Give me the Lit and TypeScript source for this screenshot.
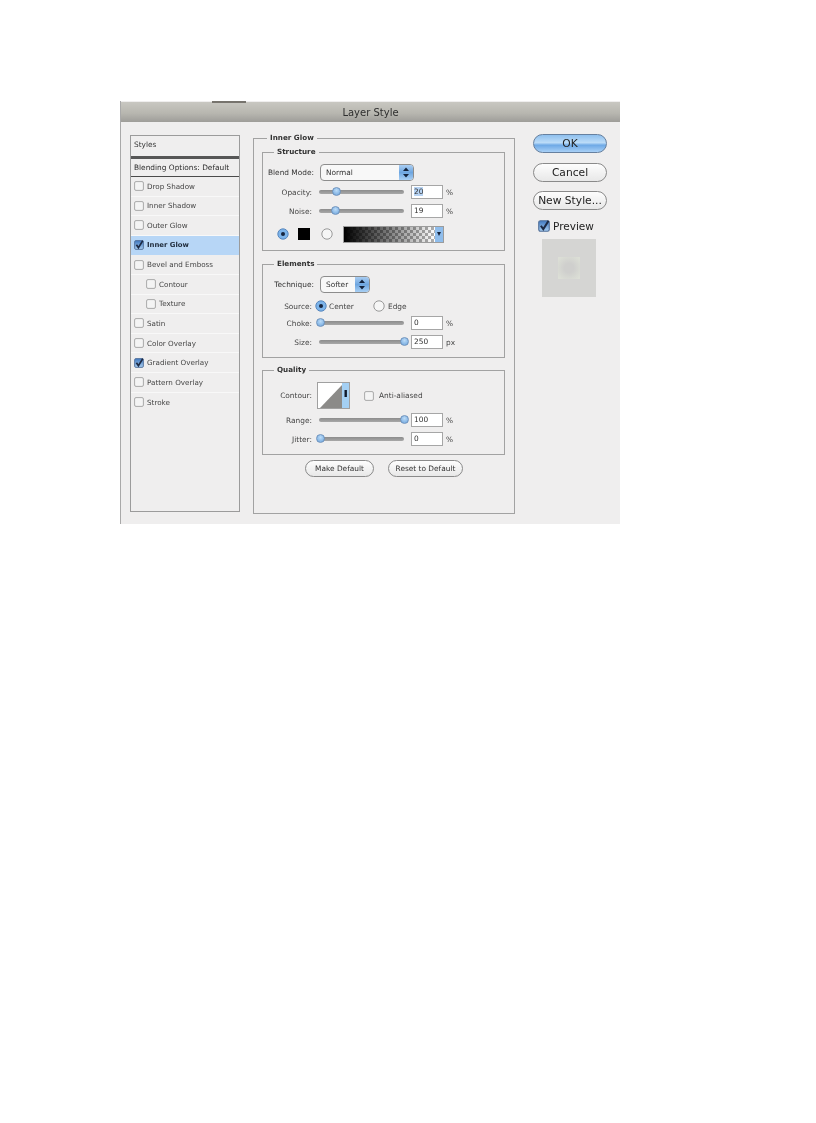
import { LitElement, html, css, svg } from "lit";
import { customElement } from "lit/decorators.js";

const box = (checked: boolean, size: number) => html`<svg class="cb" width=${size} height=${size} viewBox="0 0 10 10">
  <defs><linearGradient id="cbb" x1="0" y1="0" x2="0" y2="1"><stop offset="0" stop-color="#3f78c0"/><stop offset="1" stop-color="#a8cdf0"/></linearGradient></defs>
  <rect x=".6" y=".6" width="8.8" height="8.8" rx="1.4" fill=${checked ? "url(#cbb)" : "#f4f4f4"} stroke=${checked ? "#52709a" : "#a2a2a2"} stroke-width=".9"/>
  ${checked ? svg`<path d="M2.4 4.8 L4.4 7.6 L8.8 .6" fill="none" stroke="#1d2a44" stroke-width="1.7"/>` : ""}
</svg>`;

const radio = (on: boolean) => html`<svg class="rd" width="12" height="12" viewBox="0 0 12 12">
  <circle cx="6" cy="6" r="5.2" fill=${on ? "#7db4ea" : "#f6f6f6"} stroke=${on ? "#4e7fb8" : "#8f8f8f"} stroke-width=".9"/>
  ${on ? svg`<circle cx="6" cy="6" r="2" fill="#16243e"/>` : ""}
</svg>`;

const updown = () => html`<svg width="8" height="11" viewBox="0 0 8 11"><path d="M4 .5 L7 4 H1 Z M4 10.5 L7 7 H1 Z" fill="#14233c"/></svg>`;

const styles: [string, boolean, boolean, boolean][] = [
  ["Drop Shadow", false, false, false],
  ["Inner Shadow", false, false, false],
  ["Outer Glow", false, false, false],
  ["Inner Glow", true, false, true],
  ["Bevel and Emboss", false, false, false],
  ["Contour", false, true, false],
  ["Texture", false, true, false],
  ["Satin", false, false, false],
  ["Color Overlay", false, false, false],
  ["Gradient Overlay", true, false, false],
  ["Pattern Overlay", false, false, false],
  ["Stroke", false, false, false],
];

@customElement("app-root")
export class AppRoot extends LitElement {
  static styles = css`
    :host { display: block; padding: 101px 0 0 120px; background: #fff; height: 1022px; box-sizing: content-box;
      font-family: "DejaVu Sans", sans-serif; color: #333; }
    .dialog { position: relative; width: 500px; height: 423px; background: #efeeee; border-left: 1px solid #a9a9a9; box-sizing: border-box;
      filter: blur(.4px); overflow: hidden; }
    .notch { position: absolute; left: 91px; top: 0; width: 34px; height: 2px; background: #77746e; }
    .title { height: 20px; margin-top: 1px; background: linear-gradient(#c8c7c1, #b8b7b0 55%, #9e9d99); text-align: center; font-size: 10px; line-height: 21px; color: #2e2e2e; }
    .body { display: flex; align-items: flex-start; padding: 13px 0 0 9px; }

    .list { width: 110px; height: 377px; border: 1px solid #9b9b9b; box-sizing: border-box; flex: none; }
    .head { height: 20px; line-height: 18px; padding-left: 3px; font-size: 7.4px; color: #333; border-bottom: 3px solid #565656; }
    .blend { height: 18px; line-height: 17px; padding-left: 3px; font-size: 7.4px; color: #2b2b2b; border-bottom: 1px solid #4a4a4a; box-sizing: border-box; }
    .item { height: 19.6px; display: flex; align-items: center; gap: 3px; padding-left: 3px; font-size: 7.2px; border-bottom: 1px solid #f8f8f8; box-sizing: border-box; color: #444; }
    .item.sub { padding-left: 15px; }
    .item.sel { background: #b7d6f6; color: #1e2a3a; font-weight: 700; border-bottom-color: #b7d6f6; font-size: 6.9px; }
    .item:nth-child(n+14) { border-bottom: none; }

    .main { position: relative; width: 262px; height: 376px; margin: 3px 0 0 13px; border: 1px solid #a2a2a2; box-sizing: border-box; padding: 13px 8px 0; flex: none; }
    .legend { position: absolute; left: 13px; top: -7px; padding: 0 3px; background: #efeeee; font-size: 7.2px; font-weight: 700; color: #333; line-height: 12px; }
    .group { position: relative; width: 243px; border: 1px solid #a2a2a2; box-sizing: border-box; margin-bottom: 12px; }
    .group .legend { left: 11px; }
    .g1 { height: 99px; margin-bottom: 13px; }
    .g2 { height: 94px; }
    .g3 { height: 85px; margin-bottom: 5px; }
    .row { display: flex; align-items: center; height: 16px; font-size: 7.4px; color: #444; }
    .lab { width: 49px; text-align: right; flex: none; white-space: nowrap; }
    .lab.wide { width: 51px; color: #333; }
    .slider { position: relative; width: 85px; height: 4px; margin-left: 7px; background: linear-gradient(#8c8c8c, #a8a8a8); border-radius: 2px; flex: none; }
    .thumb { position: absolute; top: -3px; width: 9px; height: 9px; margin-left: -4.5px; border-radius: 50%; background: radial-gradient(circle at 50% 35%, #bcdcf8, #6ba3dc); border: 1px solid #6f93bd; box-sizing: border-box; }
    .num { width: 32px; height: 14px; margin-left: 7px; border: 1px solid #a6a6a6; background: #fff; box-sizing: border-box; padding-left: 2px; line-height: 12px; font-size: 7.4px; flex: none; color: #333; }
    .num.focus span { background: #b7d3f3; }
    .unit { margin-left: 3px; font-size: 7.4px; }

    .select { display: flex; justify-content: space-between; align-items: center; height: 17px; margin-left: 6px; border: 1px solid #8d8d8d; border-radius: 4px; background: #f8f8f8; box-sizing: border-box; padding-left: 5px; overflow: hidden; font-size: 7.4px; color: #333; flex: none; }
    .select b { display: flex; align-items: center; justify-content: center; font-weight: 400; width: 14px; height: 100%; background: linear-gradient(#a9cdf2, #6ea6e0 50%, #a8cff4); }
    .sel1 { width: 94px; }
    .sel2 { width: 50px; }
    .swatches { display: flex; align-items: center; height: 18px; padding-left: 14px; }
    .black { width: 12px; height: 12px; margin: 0 11px 0 9px; background: #000; flex: none; }
    .swatches .rd { flex: none; }
    .grad { display: flex; justify-content: flex-end; width: 101px; height: 17px; margin-left: 10px; border: 1px solid #9c9c9c; box-sizing: border-box; flex: none;
      background: linear-gradient(90deg, #000, rgba(0,0,0,0) 92%), repeating-conic-gradient(#b0b0b0 0 25%, #fff 0 50%) 0 0 / 6px 6px; }
    .grad b { display: flex; align-items: center; justify-content: center; width: 8px; background: #8fbdec; }
    .tri { width: 0; height: 0; border-left: 2.5px solid transparent; border-right: 2.5px solid transparent; border-top: 4px solid #14233c; }
    .src .rd { margin-left: 3px; flex: none; }
    .src .t1 { margin: 0 16px 0 2px; width: 25px; }
    .src .t2 { margin-left: 3px; }
    .contour { display: flex; align-items: center; height: 27px; font-size: 7.4px; color: #444; }
    .contour svg.c { margin-left: 5px; flex: none; }
    .contour .cb { margin-left: 14px; flex: none; }
    .contour .aa { margin-left: 5px; }

    .actions { display: flex; justify-content: center; gap: 14px; }
    .btn { display: flex; align-items: center; justify-content: center; height: 17px; border: 1.5px solid #8a8a8a; border-radius: 9px; background: linear-gradient(#fdfdfd, #e8e8e8); box-sizing: border-box; font-size: 7.4px; color: #333; white-space: nowrap; }
    .b1 { width: 69px; }
    .b2 { width: 75px; }

    .side { width: 74px; margin: -1px 0 0 18px; display: flex; flex-direction: column; gap: 9.5px; flex: none; }
    .side .btn { height: 19px; border-radius: 10px; font-size: 10.7px; color: #222; }
    .side .ok { background: linear-gradient(#8fc0ee, #bcdcf8 45%, #6ea9e6 60%, #a8d0f6); border-color: #66809f; }
    .pv { display: flex; align-items: center; gap: 3px; margin: -1px 0 0 5px; font-size: 10.5px; color: #222; line-height: 14px; }
    .pv .cb { flex: none; }
    .thumbnail { display: flex; align-items: center; justify-content: center; width: 54px; height: 58px; margin: -3.5px 0 0 9px; background: #d5d5d3; }
    .thumbnail i { display: block; width: 22px; height: 22px; background: radial-gradient(circle, #cfcfcd 30%, #dcdfd6 90%); }
  `;

  private slider(label: string, top: number, pos: number, value: string, unit = "%", focus = false) {
    return html`<div class="row" style="margin-top:${top}px">
      <span class="lab">${label}</span>
      <div class="slider"><div class="thumb" style="left:${pos}px"></div></div>
      <div class="num ${focus ? "focus" : ""}"><span>${value}</span></div>
      <span class="unit">${unit}</span>
    </div>`;
  }

  render() {
    return html`<div class="dialog">
      <div class="notch"></div>
      <div class="title">Layer Style</div>
      <div class="body">
        <div class="list">
          <div class="head">Styles</div>
          <div class="blend">Blending Options: Default</div>
          ${styles.map(([n, c, sub, sel]) => html`<div class="item ${sub ? "sub" : ""} ${sel ? "sel" : ""}">${box(c, 10)}<span>${n}</span></div>`)}
        </div>

        <div class="main">
          <div class="legend">Inner Glow</div>

          <div class="group g1">
            <div class="legend">Structure</div>
            <div class="row" style="margin-top:11px">
              <span class="lab wide">Blend Mode:</span>
              <div class="select sel1"><span>Normal</span><b>${updown()}</b></div>
            </div>
            ${this.slider("Opacity:", 4, 17, "20", "%", true)}
            ${this.slider("Noise:", 3, 16, "19")}
            <div class="swatches" style="margin-top:6px">
              ${radio(true)}<div class="black"></div>${radio(false)}
              <div class="grad"><b><i class="tri"></i></b></div>
            </div>
          </div>

          <div class="group g2">
            <div class="legend">Elements</div>
            <div class="row" style="margin-top:11px">
              <span class="lab wide">Technique:</span>
              <div class="select sel2"><span>Softer</span><b>${updown()}</b></div>
            </div>
            <div class="row src" style="margin-top:6px">
              <span class="lab">Source:</span>
              ${radio(true)}<span class="t1">Center</span>${radio(false)}<span class="t2">Edge</span>
            </div>
            ${this.slider("Choke:", 1, 1, "0")}
            ${this.slider("Size:", 3, 85, "250", "px")}
          </div>

          <div class="group g3">
            <div class="legend">Quality</div>
            <div class="contour" style="margin-top:11px">
              <span class="lab">Contour:</span>
              <svg class="c" width="33" height="27" viewBox="0 0 33 27">
                <rect x=".5" y=".5" width="32" height="26" fill="#fff" stroke="#a0a0a0"/>
                <path d="M3 26 L25 3 V26 Z" fill="#8b8a88"/>
                <rect x="25" y="1" width="7" height="25" fill="#a4d0f4"/>
                <rect x="27.5" y="8" width="2.4" height="7" fill="#10192a"/>
              </svg>
              ${box(false, 10)}<span class="aa">Anti-aliased</span>
            </div>
            ${this.slider("Range:", 3, 85, "100")}
            ${this.slider("Jitter:", 3, 1, "0")}
          </div>

          <div class="actions">
            <div class="btn b1">Make Default</div>
            <div class="btn b2">Reset to Default</div>
          </div>
        </div>

        <div class="side">
          <div class="btn ok">OK</div>
          <div class="btn">Cancel</div>
          <div class="btn">New Style...</div>
          <div class="pv">${box(true, 12)}<span>Preview</span></div>
          <div class="thumbnail"><i></i></div>
        </div>
      </div>
    </div>`;
  }
}
